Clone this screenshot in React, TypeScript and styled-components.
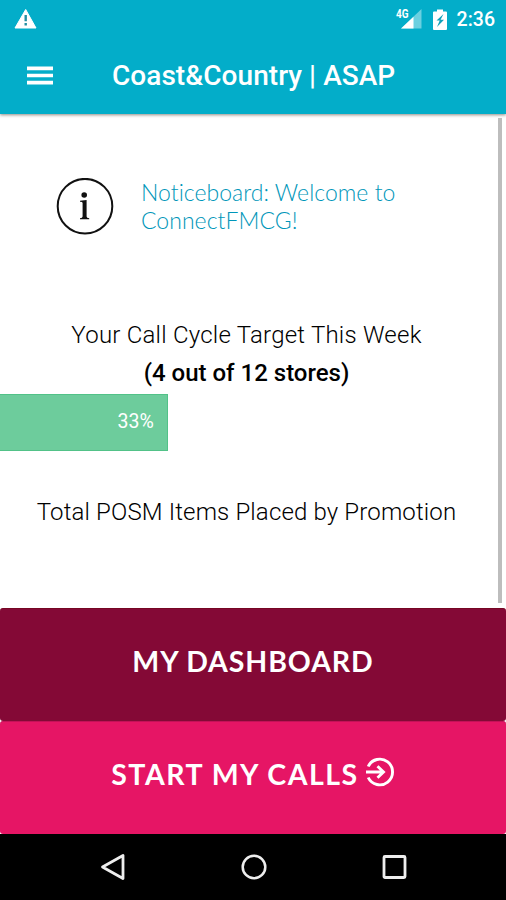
import React from "react";
import styled, { createGlobalStyle } from "styled-components";

const GlobalStyle = createGlobalStyle`
  * { box-sizing: border-box; }
  body { margin: 0; background: #fff; font-family: Roboto, sans-serif; }
`;

const Screen = styled.div`
  width: 506px;
  height: 900px;
  display: flex;
  flex-direction: column;
  overflow: hidden;
  background: #fff;
`;

const Header = styled.header`
  height: 114px;
  flex: none;
  background: #03adc9;
  color: #fff;
  box-shadow: 0 1px 3px rgba(70, 60, 50, 0.6);
`;

const StatusBar = styled.div`
  height: 38px;
  display: flex;
  align-items: center;
  padding: 0 11px 0 14px;
`;

const StatusIcons = styled.div`
  margin-left: auto;
  display: flex;
  align-items: center;
  gap: 11px;
`;

const Clock = styled.span`
  font-size: 19.5px;
  font-weight: 500;
  line-height: 38px;
  padding-top: 1px;
  margin-left: -1px;
`;

const Toolbar = styled.div`
  height: 76px;
  display: flex;
  align-items: center;
  padding: 0 0 1px 27px;
`;

const MenuButton = styled.button`
  display: flex;
  padding: 0;
  border: 0;
  background: none;
`;

const Title = styled.h1`
  margin: 1px 0 0 59px;
  font-size: 28px;
  line-height: 32px;
  font-weight: 500;
  letter-spacing: 0.05px;
  white-space: nowrap;
`;

const Content = styled.main`
  height: 494px;
  flex: none;
  display: flex;
  padding-top: 4px;
`;

const Page = styled.div`
  width: 498px;
  flex: none;
`;

const ScrollThumb = styled.div`
  width: 4px;
  height: 485px;
  background: #bdbdbd;
`;

const Notice = styled.section`
  display: flex;
  padding: 60px 0 0 56px;
  height: 198px;
`;

const NoticeText = styled.p`
  margin: 0 0 0 27px;
  font-family: Lato, sans-serif;
  font-size: 23px;
  line-height: 28px;
  font-weight: 300;
  letter-spacing: 0.04px;
  color: #0096b9;
`;

const Line = styled.p<{ $bold?: boolean; $spacing?: number }>`
  margin: 0;
  width: 493px;
  text-align: center;
  white-space: nowrap;
  font-size: 24px;
  line-height: 38px;
  font-weight: ${(p) => (p.$bold ? 500 : 300)};
  letter-spacing: ${(p) => p.$spacing ?? 0}px;
  color: #000;
`;

const Progress = styled.div`
  height: 57px;
  margin: 2px 0 42px;
`;

const ProgressFill = styled.div`
  height: 100%;
  padding: 0 13px 2px 0;
  display: flex;
  align-items: center;
  justify-content: flex-end;
  background: #6dcc9c;
  border: solid #52c288;
  border-width: 1px 1px 1px 0;
  color: #fff;
  font-size: 19.5px;
`;

const Actions = styled.div`
  flex: none;
  height: 226px;
  background: #fff;
`;

const ActionButton = styled.button<{ $color: string; $edge: string; $spacing: number }>`
  width: 100%;
  height: 113px;
  display: flex;
  align-items: center;
  justify-content: center;
  padding: 0 0 8px;
  border: 0;
  border-top: 1px solid ${(p) => p.$edge};
  border-radius: 3px;
  background: ${(p) => p.$color};
  color: #fff;
  font-family: Lato, sans-serif;
  font-size: 28.5px;
  font-weight: 700;
  letter-spacing: ${(p) => p.$spacing}px;
  white-space: nowrap;

  svg { margin-left: 6px; margin-top: -5px; }
`;

const NavBar = styled.nav`
  flex: 1;
  display: flex;
  align-items: center;
  justify-content: space-between;
  padding: 0 99px 0 100px;
  background: #000;
`;

const progress = 33;

export default function App() {
  return (
    <>
      <GlobalStyle />
      <Screen>
        <Header>
          <StatusBar>
            <svg width="23" height="20" viewBox="0 0 23 20">
              <path d="M11.7 0.5 L22 19 H1 Z" fill="#fff" stroke="#fff" strokeLinejoin="round" />
              <path d="M11.7 6v6.3M11.7 14v2.4" stroke="#238fa4" strokeWidth="2.4" />
            </svg>
            <StatusIcons>
              <svg width="28" height="32" viewBox="-2 -5 28 32">
                <path d="M5 20.5 L25.5 1 V20.5Z" fill="#6bd0e0" />
                <path d="M5 20.5 L17.5 8.7 V20.5Z" fill="#fff" />
                <path d="M0 0H13.5V10.5H0Z" fill="#03adc9" />
                <text x="0" y="10" fill="#fff" fontFamily="Roboto" fontSize="12.5" fontWeight="700" textLength="12.5" lengthAdjust="spacingAndGlyphs">4G</text>
              </svg>
              <svg width="14" height="21" viewBox="0 0 14 21">
                <path d="M1 2.5H4V0.5H10V2.5H13Q14 2.5 14 3.5V20Q14 21 13 21H1Q0 21 0 20V3.5Q0 2.5 1 2.5Z" fill="#fff" />
                <path d="M10.5 5 3.5 11.5h3.2L4 18l7-7.2H7.6Z" fill="#13a2bb" />
              </svg>
              <Clock>2:36</Clock>
            </StatusIcons>
          </StatusBar>
          <Toolbar>
            <MenuButton aria-label="Menu">
              <svg width="26" height="19" viewBox="0 0 26 19">
                <path d="M0 2.3h26M0 9.5h26M0 16.6h26" stroke="#fff" strokeWidth="3.7" />
              </svg>
            </MenuButton>
            <Title>Coast&amp;Country | ASAP</Title>
          </Toolbar>
        </Header>
        <Content>
          <Page>
            <Notice>
              <svg width="58" height="58" viewBox="0 0 58 58">
                <circle cx="29" cy="28.2" r="27.3" fill="none" stroke="#111" strokeWidth="2" />
                <circle cx="28.2" cy="17" r="2.8" fill="#111" />
                <path d="M24 22.7 L30.6 22 V38.5 Q30.6 40 33.2 40.2 V41.3 H24 V40.2 Q26.6 40 26.6 38.5 V25 Q26.6 23.6 24 23.7Z" fill="#111" />
              </svg>
              <NoticeText>
                Noticeboard: Welcome to
                <br />
                ConnectFMCG!
              </NoticeText>
            </Notice>
            <Line $spacing={0.23}>Your Call Cycle Target This Week</Line>
            <Line $bold>(4 out of 12 stores)</Line>
            <Progress>
              <ProgressFill style={{ width: `${(progress / 98) * 100}%` }}>{progress}%</ProgressFill>
            </Progress>
            <Line $spacing={0.15}>Total POSM Items Placed by Promotion</Line>
          </Page>
          <ScrollThumb />
        </Content>
        <Actions>
          <ActionButton $color="#840936" $edge="#760723" $spacing={0.9}>MY DASHBOARD</ActionButton>
          <ActionButton $color="#e61565" $edge="#c51158" $spacing={1.5}>
            START MY CALLS
            <svg width="30" height="30" viewBox="0 0 30 30" fill="none" stroke="#fff" strokeWidth="2.9">
              <path d="M3.2 9.5 A12.8 12.8 0 1 1 3.2 20.5" />
              <path d="M1 15H18M12.5 9.3 18.5 15l-6 5.7" />
            </svg>
          </ActionButton>
        </Actions>
        <NavBar>
          <svg width="26" height="28" viewBox="0 0 26 28">
            <path d="M2.5 14 23 2.5V25.5Z" fill="none" stroke="#eee" strokeWidth="2.8" strokeLinejoin="round" />
          </svg>
          <svg width="26" height="28" viewBox="0 0 26 28">
            <circle cx="13" cy="14" r="11.3" fill="none" stroke="#eee" strokeWidth="2.5" />
          </svg>
          <svg width="25" height="28" viewBox="0 0 25 28">
            <rect x="2" y="3.5" width="21" height="21" rx="1" fill="none" stroke="#eee" strokeWidth="2.8" />
          </svg>
        </NavBar>
      </Screen>
    </>
  );
}
